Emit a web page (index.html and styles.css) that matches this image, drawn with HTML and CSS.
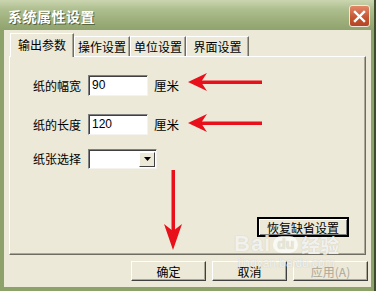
FILE: index.html
```html
<!DOCTYPE html>
<html lang="zh-CN">

<head>
    <meta charset="UTF-8">
    <title>系统属性设置</title>
    <link rel="stylesheet" href="styles.css">
</head>

<body>
    <div class="window">
        <div class="titlebar">
            <span class="title">系统属性设置</span>
            <button class="close">
                <svg width="13" height="13" viewBox="0 0 13 13">
                    <path d="M2 2 L11 11 M11 2 L2 11" stroke="#fff" stroke-width="2.4" stroke-linecap="square" />
                </svg>
            </button>
        </div>

        <div class="client">
            <div class="tabs">
                <div class="tab active">输出参数</div>
                <div class="tab">操作设置</div>
                <div class="tab">单位设置</div>
                <div class="tab last">界面设置</div>
            </div>

            <div class="panel">
                <div class="field">
                    <span class="label">纸的幅宽</span>
                    <div class="input">90</div>
                    <span class="unit">厘米</span>
                </div>
                <div class="field second">
                    <span class="label">纸的长度</span>
                    <div class="input">120</div>
                    <span class="unit">厘米</span>
                </div>
                <div class="field third">
                    <span class="label">纸张选择</span>
                    <div class="select">
                        <span class="select-btn">
                            <svg width="7" height="4" viewBox="0 0 7 4"><path d="M0 0 H7 L3.5 4 Z" fill="#000" /></svg>
                        </span>
                    </div>
                </div>
                <button class="btn restore">恢复缺省设置</button>
            </div>

            <div class="actions">
                <button class="btn">确定</button>
                <button class="btn">取消</button>
                <button class="btn disabled">应用(A)</button>
            </div>
        </div>

        <!-- red annotation arrows -->
        <svg class="arrows" width="376" height="291" viewBox="0 0 376 291">
            <g fill="#e8101a" stroke="none">
                <rect x="198" y="80.5" width="64" height="3.5" />
                <path d="M188 82 L207 73 L201 82 L207 91 Z" />
                <rect x="198" y="121.5" width="64" height="3.5" />
                <path d="M188 123 L207 114 L201 123 L207 132 Z" />
                <rect x="171.5" y="170" width="3.5" height="64" />
                <path d="M173 250 L164 224 L173 231 L182 224 Z" />
            </g>
        </svg>

        <div class="watermark">
            <div class="wm-logo"><span class="wm-bai">Bai</span><span class="wm-du">du</span><span class="wm-jy">经验</span></div>
            <div class="wm-url">jingyan.baidu.com</div>
        </div>
    </div>
</body>

</html>
```

FILE: styles.css
```css
* {
    margin: 0;
    padding: 0;
    box-sizing: border-box;
}

body {
    font-family: "Noto Sans CJK SC", sans-serif;
    font-size: 12px;
    color: #000;
    background: #fff;
}

.window {
    position: relative;
    width: 376px;
    height: 291px;
    display: flex;
    flex-direction: column;
    background: #8da26b;
    border-right: 2px solid #3e4c2c;
    overflow: hidden;
}

.titlebar {
    height: 30px;
    display: flex;
    align-items: center;
    justify-content: space-between;
    padding: 0 4px 0 8px;
    background: linear-gradient(#cbd6b0 0%, #afbf90 30%, #9cae7a 70%, #90a26d 100%);
}

.title {
    color: #fff;
    font-size: 14px;
    font-weight: bold;
    letter-spacing: 0.5px;
    text-shadow: 1px 1px 0 #56653c;
    margin-top: 1px;
}

.close {
    width: 21px;
    height: 22px;
    display: flex;
    justify-content: center;
    align-items: center;
    background: linear-gradient(#e2896a, #c4532f 60%, #b44525);
    border: 1px solid #f3e6dc;
    border-radius: 3px;
    margin-top: 2px;
}

.client {
    flex: 1;
    margin: 0 3px 4px 4px;
    background: #ece9d8;
    display: flex;
    flex-direction: column;
    padding-top: 3px;
}

.tabs {
    display: flex;
    align-items: flex-end;
    height: 23px;
    padding-left: 6px;
    position: relative;
    z-index: 1;
}

.tab {
    height: 20px;
    line-height: 19px;
    text-align: center;
    border-top: 1px solid #fff;
    border-left: 1px solid #fff;
    border-right: 1px solid #6f6d61;
    box-shadow: inset -1px 0 0 #aca899;
    width: 56px;
}

.tab.active {
    width: 64px;
    height: 24px;
    line-height: 22px;
    margin-bottom: -1px;
    background: #ece9d8;
}

.tab.last {
    width: 63px;
}

.panel {
    height: 199px;
    margin: 0 5px 0 5px;
    border-top: 1px solid #fff;
    border-left: 1px solid #fff;
    border-right: 1px solid #6f6d61;
    border-bottom: 1px solid #6f6d61;
    box-shadow: inset -1px -1px 0 #aca899;
    padding: 18px 16px 17px 23px;
    display: flex;
    flex-direction: column;
}

.field {
    display: flex;
    align-items: center;
    height: 21px;
}

.field.second {
    margin-top: 18px;
}

.field.third {
    margin-top: 13px;
}

.label {
    width: 55px;
}

.input {
    width: 60px;
    height: 21px;
    background: #fff;
    border-top: 1px solid #808080;
    border-left: 1px solid #808080;
    border-right: 1px solid #f4f3ee;
    border-bottom: 1px solid #f4f3ee;
    box-shadow: inset 1px 1px 0 #404040;
    padding: 2px 0 0 3px;
    font-family: "Liberation Sans", Arial, sans-serif;
    font-size: 12px;
}

.unit {
    margin-left: 6px;
    font-size: 12.5px;
}

.select {
    width: 69px;
    height: 20px;
    background: #fff;
    border-top: 1px solid #808080;
    border-left: 1px solid #808080;
    border-right: 1px solid #f4f3ee;
    border-bottom: 1px solid #f4f3ee;
    box-shadow: inset 1px 1px 0 #404040;
    display: flex;
    justify-content: flex-end;
    padding: 2px 1px 1px 2px;
}

.select-btn {
    width: 16px;
    display: flex;
    justify-content: center;
    align-items: center;
    background: #ece9d8;
    border-top: 1px solid #fff;
    border-left: 1px solid #fff;
    border-right: 1px solid #404040;
    border-bottom: 1px solid #404040;
}

.btn {
    font-family: "Noto Sans CJK SC", sans-serif;
    font-size: 12px;
    color: #000;
    height: 20px;
    width: 75px;
    background: #ece9d8;
    border-top: 1px solid #fff;
    border-left: 1px solid #fff;
    border-right: 1px solid #404040;
    border-bottom: 1px solid #404040;
    box-shadow: inset -1px -1px 0 #aca899;
}

.btn.restore {
    width: 92px;
    margin-top: auto;
    align-self: flex-end;
    border: 2px solid #000;
    box-shadow: inset 1px 1px 0 #fff, inset -1px -1px 0 #808080;
}

.btn.disabled {
    color: #aca899;
}

.actions {
    display: flex;
    justify-content: flex-end;
    gap: 6px;
    margin-top: 6px;
    padding-right: 3px;
}

.arrows {
    position: absolute;
    left: 0;
    top: 0;
    pointer-events: none;
}

.watermark {
    position: absolute;
    left: 234px;
    top: 232px;
    color: rgba(255, 255, 255, 0.8);
    text-shadow: 0 0 1px rgba(150, 150, 140, 0.5);
    pointer-events: none;
}

.wm-logo {
    display: flex;
    align-items: center;
    height: 24px;
}

.wm-bai {
    font-family: "Liberation Sans", Arial, sans-serif;
    font-weight: bold;
    font-size: 22px;
    letter-spacing: 1px;
}

.wm-du {
    font-family: "Liberation Sans", Arial, sans-serif;
    font-weight: bold;
    font-size: 14px;
    background: rgba(255, 255, 255, 0.75);
    color: rgba(236, 233, 216, 0.9);
    border-radius: 9px;
    padding: 0 4px 1px;
    margin: 0 3px 0 2px;
}

.wm-jy {
    font-size: 19px;
    font-weight: bold;
}

.wm-url {
    font-family: "Liberation Sans", Arial, sans-serif;
    font-size: 12px;
    margin-left: 4px;
    margin-top: 0;
    color: rgba(255, 255, 255, 0.75);
}
```
